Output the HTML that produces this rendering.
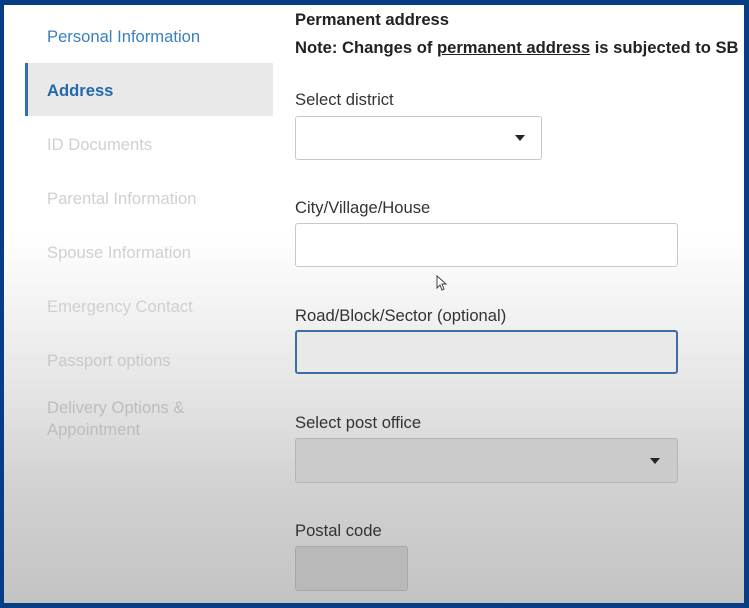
<!DOCTYPE html>
<html><head><style>
html,body{margin:0;padding:0}
body{width:749px;height:608px;position:relative;overflow:hidden;background:#063d85;font-family:"Liberation Sans",sans-serif}
#in{position:absolute;left:4px;top:5px;width:740px;height:598px;overflow:hidden;background:linear-gradient(to bottom,#ffffff 0px,#ffffff 230px,#e6e6e6 380px,#d2d2d2 480px,#c3c3c3 598px)}
.nav{position:absolute;left:43px;font-size:16.6px;color:#d0d0d0;white-space:nowrap}
.act{position:absolute;left:21px;top:58px;width:248px;height:53px;background:#e9e9e9;border-left:3px solid #2e6fb3;box-sizing:border-box}
.t{position:absolute;left:291px;font-size:16.6px;color:#333;white-space:nowrap}
.b{font-weight:bold;color:#222}
.box{position:absolute;left:291px;border:1.5px solid #c8c8c8;border-radius:3px;box-sizing:border-box;background:#fff}
.arr{position:absolute;width:0;height:0;border-left:5px solid transparent;border-right:5px solid transparent;border-top:6px solid #222}
</style></head><body>
<div id="in">
<div class="nav" style="top:22px;color:#3a7fc0">Personal Information</div>
<div class="act"></div>
<div class="nav" style="top:76px;color:#2468ad;font-weight:bold">Address</div>
<div class="nav" style="top:130px">ID Documents</div>
<div class="nav" style="top:184px">Parental Information</div>
<div class="nav" style="top:238px">Spouse Information</div>
<div class="nav" style="top:292px">Emergency Contact</div>
<div class="nav" style="top:346px;color:#c8c8c8">Passport options</div>
<div class="nav" style="top:392px;color:#bdbdbd;line-height:22px">Delivery Options &amp;<br>Appointment</div>

<div class="t b" style="top:5px">Permanent address</div>
<div class="t b" style="top:33px">Note: Changes of <u>permanent address</u> is subjected to SB</div>
<div class="t" style="top:85px">Select district</div>
<div class="box" style="top:111px;width:247px;height:44px"><div class="arr" style="left:219px;top:18px"></div></div>
<div class="t" style="top:193px">City/Village/House</div>
<div class="box" style="top:218px;width:383px;height:44px"></div>
<div class="t" style="top:301px">Road/Block/Sector (optional)</div>
<div class="box" style="top:325px;width:383px;height:44px;border:2px solid #3d6fa6;background:#e9e9e9"></div>
<div class="t" style="top:408px">Select post office</div>
<div class="box" style="top:433px;width:383px;height:45px;background:#cbcbcb;border-color:#b5b5b5"><div class="arr" style="left:354px;top:19px"></div></div>
<div class="t" style="top:516px">Postal code</div>
<div class="box" style="top:541px;width:113px;height:45px;background:#b9b9b9;border-color:#a8a8a8"></div>
<svg style="position:absolute;left:432px;top:270px" width="12" height="16" viewBox="0 0 12 16"><path d="M1 1 L1 13 L4 10 L6 15 L8 14 L6 9 L10 9 Z" fill="#fff" stroke="#444" stroke-width="1"/></svg>
</div>
</body></html>
